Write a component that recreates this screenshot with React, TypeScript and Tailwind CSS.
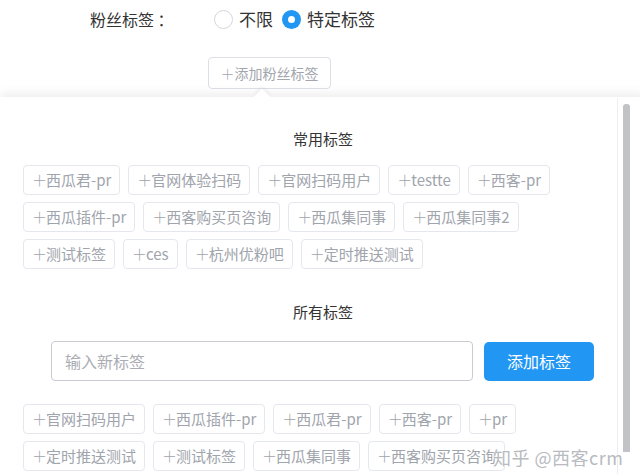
import React from 'react';

const commonTags = [
  '西瓜君-pr',
  '官网体验扫码',
  '官网扫码用户',
  'testte',
  '西客-pr',
  '西瓜插件-pr',
  '西客购买页咨询',
  '西瓜集同事',
  '西瓜集同事2',
  '测试标签',
  'ces',
  '杭州优粉吧',
  '定时推送测试',
];

const allTags = [
  '官网扫码用户',
  '西瓜插件-pr',
  '西瓜君-pr',
  '西客-pr',
  'pr',
  '定时推送测试',
  '测试标签',
  '西瓜集同事',
  '西客购买页咨询',
];

const font = { fontFamily: '"Microsoft YaHei", "Noto Sans CJK SC", "Noto Sans", sans-serif' };

const Plus = () => (
  <span className="inline-block w-[14px] overflow-visible text-left font-light">＋</span>
);

const Tag: React.FC<{ name: string }> = ({ name }) => (
  <span className="h-[30px] flex items-center px-[8px] border border-[#e4e7ed] rounded-[4px] text-[15px] text-[#a0a4ac] bg-white whitespace-nowrap">
    <Plus />
    {name}
  </span>
);

const Radio: React.FC<{ checked?: boolean; label: string }> = ({ checked, label }) => (
  <label className="flex items-center">
    {checked ? (
      <span className="w-[19px] h-[19px] rounded-full bg-[#2196f3] flex items-center justify-center">
        <span className="w-[7px] h-[7px] rounded-full bg-white" />
      </span>
    ) : (
      <span className="w-[19px] h-[19px] rounded-full border border-[#d4d7dc] bg-white" />
    )}
    <span className="ml-[6px] text-[17px] text-[#333]">{label}</span>
  </label>
);

export default function App() {
  return (
    <div className="relative w-[640px] h-[474px] bg-white overflow-hidden" style={font}>
      {/* top form */}
      <div className="h-[97px]">
        <div className="flex items-center h-[38px]">
          <span className="ml-[90px] w-[124px] text-[16px] text-[#333]">粉丝标签 ：</span>
          <Radio label="不限" />
          <div className="ml-[9px]">
            <Radio checked label="特定标签" />
          </div>
        </div>
        <div className="mt-[19px] ml-[208px]">
          <button className="h-[32px] w-[123px] border border-[#dcdfe6] rounded-[4px] text-[14px] text-[#a3a6ad] flex items-center justify-center">
            <Plus />添加粉丝标签
          </button>
        </div>
      </div>

      {/* popover */}
      <div className="relative w-[646px] h-[377px] bg-white shadow-[0_-3px_10px_rgba(0,0,0,0.08)]">
        <div className="absolute -top-[6px] left-[256px] w-[12px] h-[12px] rotate-45 bg-white shadow-[-2px_-2px_4px_rgba(0,0,0,0.05)]" />
        <div className="relative pt-[31px]">
          <div className="text-center text-[15px] text-[#333] leading-[22px]">常用标签</div>
          <div className="mt-[15px] pl-[23px] pr-[40px] flex flex-wrap gap-x-2 gap-y-[7px]">
            {commonTags.map((t) => (
              <Tag key={t} name={t} />
            ))}
          </div>
          <div className="mt-[32px] text-center text-[15px] text-[#333] leading-[22px]">所有标签</div>
          <div className="mt-[18px] ml-[51px] flex items-center">
            <input
              className="w-[422px] h-[40px] border border-[#c8ccd2] rounded-[4px] px-[13px] text-[16px] text-[#333] placeholder:text-[#aaadb3] outline-none"
              placeholder="输入新标签"
              style={font}
            />
            <button className="ml-[11px] w-[110px] h-[39px] rounded-[5px] bg-[#2196f3] text-white text-[16px]">
              添加标签
            </button>
          </div>
          <div className="mt-[23px] pl-[23px] pr-[40px] flex flex-wrap gap-x-2 gap-y-[7px]">
            {allTags.map((t) => (
              <Tag key={t} name={t} />
            ))}
          </div>
        </div>
      </div>

      {/* scrollbar */}
      <div className="absolute top-[98px] left-[617px] w-[23px] h-[376px] bg-white border-l border-[#eceef1]">
        <div className="ml-[5px] mt-[6px] w-[7px] h-[348px] rounded-t-[3px] bg-[#c1c3c6]" />
      </div>

      {/* watermark */}
      <div className="absolute left-[493px] top-[444px] text-[18px] text-[#b8bbbf] tracking-[0.5px] [text-shadow:0_0_2px_#fff,0_0_2px_#fff]">
        知乎 @西客crm
      </div>
    </div>
  );
}
